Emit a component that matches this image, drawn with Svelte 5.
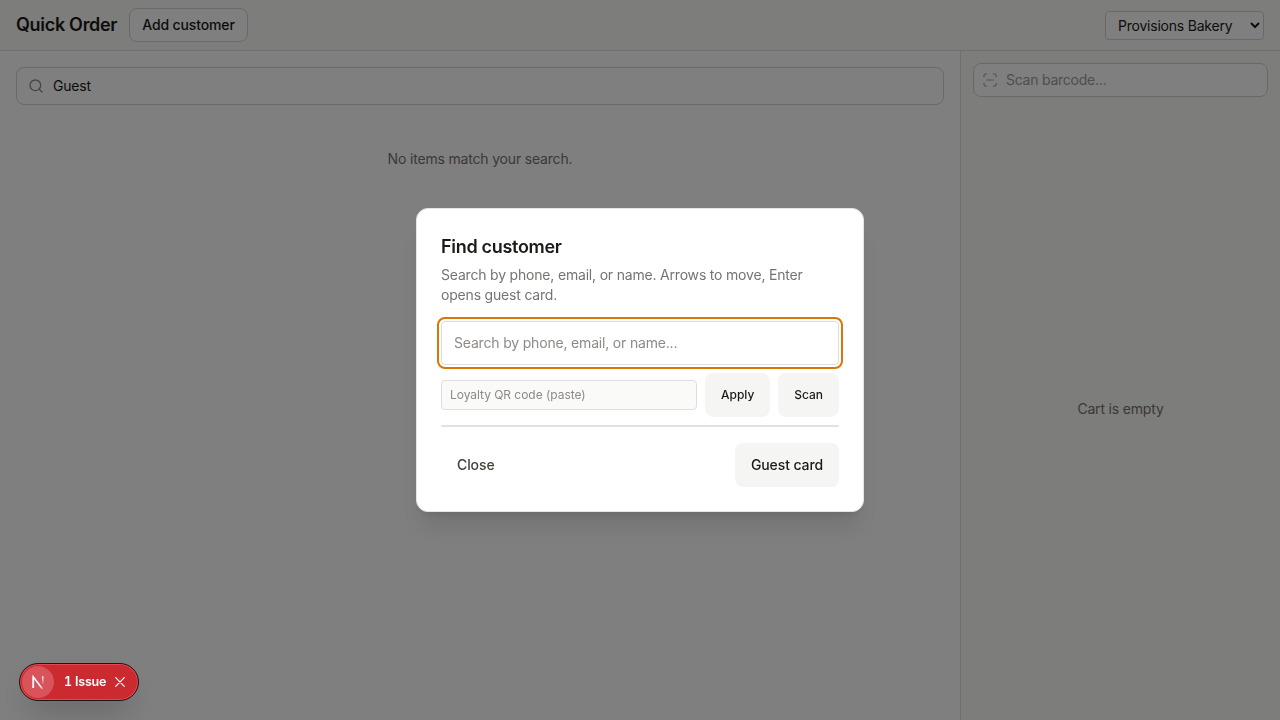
<script>
  let query = $state('Guest');
  let location = $state('Provisions Bakery');
</script>

<div class="page">
  <header>
    <h1>Quick Order</h1>
    <button class="add">Add customer</button>
    <select bind:value={location}>
      <option>Provisions Bakery</option>
    </select>
  </header>
  <div class="body">
    <main>
      <label class="search">
        <svg width="16" height="16" viewBox="0 0 24 24" fill="none" stroke="currentColor" stroke-width="2" stroke-linecap="round" stroke-linejoin="round">
          <circle cx="11" cy="11" r="8" /><path d="m21 21-4.3-4.3" />
        </svg>
        <input bind:value={query} />
      </label>
      <p class="none">No items match your search.</p>
    </main>
    <aside>
      <label class="scan">
        <svg width="16" height="16" viewBox="0 0 24 24" fill="none" stroke="currentColor" stroke-width="1.8" stroke-linecap="round" stroke-linejoin="round">
          <path d="M3 7V5a2 2 0 0 1 2-2h2M17 3h2a2 2 0 0 1 2 2v2M21 17v2a2 2 0 0 1-2 2h-2M7 21H5a2 2 0 0 1-2-2v-2M7 12h10" />
        </svg>
        <input placeholder="Scan barcode..." />
      </label>
      <div class="empty">Cart is empty</div>
    </aside>
  </div>
</div>

<div class="overlay">
  <div class="modal" role="dialog" aria-label="Find customer">
    <h2>Find customer</h2>
    <p class="desc">Search by phone, email, or name. Arrows to move, Enter opens guest card.</p>
    <input class="find" placeholder="Search by phone, email, or name..." />
    <div class="loyalty">
      <input placeholder="Loyalty QR code (paste)" />
      <button class="soft small">Apply</button>
      <button class="soft small">Scan</button>
    </div>
    <div class="results"></div>
    <footer>
      <button class="close">Close</button>
      <button class="soft">Guest card</button>
    </footer>
  </div>
</div>

<div class="issue">
  <span class="logo">
    <svg width="36" height="36" viewBox="0 0 36 36" fill="none">
      <defs>
        <linearGradient id="diag" x1="18" y1="18" x2="24.5" y2="26" gradientUnits="userSpaceOnUse">
          <stop offset="0.4" stop-color="#fff" /><stop offset="1" stop-color="#fff" stop-opacity="0" />
        </linearGradient>
        <linearGradient id="stem" x1="23" y1="12" x2="23" y2="21" gradientUnits="userSpaceOnUse">
          <stop stop-color="#fff" /><stop offset="1" stop-color="#fff" stop-opacity="0" />
        </linearGradient>
      </defs>
      <path d="M13.3 24V12.8L22.5 25" stroke="url(#diag)" stroke-width="1.6" />
      <path d="M13.3 24V12.8" stroke="#fff" stroke-width="1.5" />
      <path d="M22.8 12.3V20.5" stroke="url(#stem)" stroke-width="1.5" />
    </svg>
  </span>
  <span class="count">1 Issue</span>
  <svg class="x" width="10" height="10" viewBox="0 0 10 10" stroke="#fff" stroke-width="1.2" stroke-linecap="round"><path d="M.7.7l8.6 8.6M9.3.7L.7 9.3" /></svg>
</div>

<style>
  :global(body) { overflow: hidden; }
  :global(*) { box-sizing: border-box; }
  .page, .overlay, .issue { font-family: Inter, sans-serif; font-size: 14px; line-height: 20px; letter-spacing: -.18px; color: #1c1917; }
  h1, h2, p { margin: 0; }
  input, button, select { font: inherit; color: inherit; letter-spacing: inherit; outline: none; margin: 0; }
  button { letter-spacing: -.1px; }
  input { min-width: 0; }
  .page { height: 720px; display: flex; flex-direction: column; background: #fff; }
  header { height: 51px; display: flex; align-items: center; gap: 12px; padding: 0 16px; background: #fafaf9; border-bottom: 1px solid #e0dedc; }
  h1 { width: 101px; white-space: nowrap; font-size: 18px; font-weight: 600; line-height: 28px; letter-spacing: -.3px; }
  .add { width: 119px; height: 34px; padding: 0; border: 1px solid #d6d3d1; border-radius: 8px; background: #fff; font-weight: 500; letter-spacing: -.14px; }
  select { margin-left: auto; width: 159px; height: 29px; margin-top: 1px; padding: 0 8px; border: 1px solid #d6d3d1; border-radius: 4px; background: #fff; letter-spacing: -.22px; }
  .body { flex: 1; display: flex; }
  main { flex: 1; padding: 16px; }
  .search, .scan { display: flex; align-items: center; border: 1px solid #d6d3d1; border-radius: 8px; background: #fff; }
  .search { height: 38px; padding-left: 11px; gap: 9px; }
  .search svg, .scan svg { color: #8f8a86; flex: none; }
  .scan svg { color: #a8a29e; }
  .search input, .scan input { flex: 1; border: 0; background: transparent; padding: 0; }
  .none { margin-top: 44px; text-align: center; color: #78716c; }
  aside { width: 320px; border-left: 1px solid #e0dedc; background: #fafaf9; padding: 12px; display: flex; flex-direction: column; }
  .scan { height: 34px; padding-left: 8px; gap: 8px; letter-spacing: -.25px; }
  .scan input::placeholder { color: #a09b97; }
  .empty { flex: 1; padding-top: 12px; display: grid; place-items: center; color: #78716c; }
  .overlay { position: fixed; inset: 0; background: rgba(0, 0, 0, .5); display: grid; place-items: center; }
  .modal { width: 448px; height: 304px; padding: 24px; border: 1px solid #e7e5e4; border-radius: 12px; background: #fff; box-shadow: 0 20px 25px -5px rgba(0, 0, 0, .1), 0 8px 10px -6px rgba(0, 0, 0, .1); }
  h2 { font-size: 18px; font-weight: 600; line-height: 28px; letter-spacing: -.3px; }
  .desc { margin-top: 4px; color: #777370; letter-spacing: -.19px; }
  .find { display: block; width: 100%; height: 44px; margin-top: 16px; padding: 0 12px 2px; border: 1px solid #e0dedc; border-radius: 4px; outline: 2px solid #d97706; outline-offset: 2px; }
  .find::placeholder, .loyalty input::placeholder { color: #8f8a86; }
  .loyalty { display: flex; align-items: center; gap: 8px; margin-top: 8px; font-size: 12px; letter-spacing: -.04px; }
  .loyalty input { flex: 1; height: 30px; padding: 0 8px 2px; border: 1px solid #e0dedc; border-radius: 4px; background: #fafaf9; }
  .loyalty button { letter-spacing: -.03px; }
  .soft, .close { height: 44px; padding: 0 16px; border: 0; border-radius: 8px; font-weight: 500; }
  .soft { background: #f5f5f4; }
  .close { background: transparent; color: #44403c; }
  .results { margin-top: 8px; height: 2px; border-radius: 2px; background: #e3e0e0; }
  footer { margin-top: 16px; display: flex; justify-content: space-between; }
  .issue { position: fixed; left: 19px; top: 663px; width: 120px; height: 38px; border-radius: 19px; display: flex; align-items: center; background: #ca2a30; border: 1px solid #171717; box-shadow: inset 0 0 0 1px #e5484d, 0 16px 32px -8px rgba(0, 0, 0, .24); color: #fff; }
  .logo { width: 32px; height: 32px; margin-left: 2px; border-radius: 50%; background: #d8535a; display: grid; place-items: center; }
  .logo svg { margin: -2px; }
  .count { width: 42px; margin-left: 10px; white-space: nowrap; font-size: 12.5px; font-weight: 600; letter-spacing: -.22px; font-variant-numeric: tabular-nums; }
  .x { margin-left: 9px; }
</style>
